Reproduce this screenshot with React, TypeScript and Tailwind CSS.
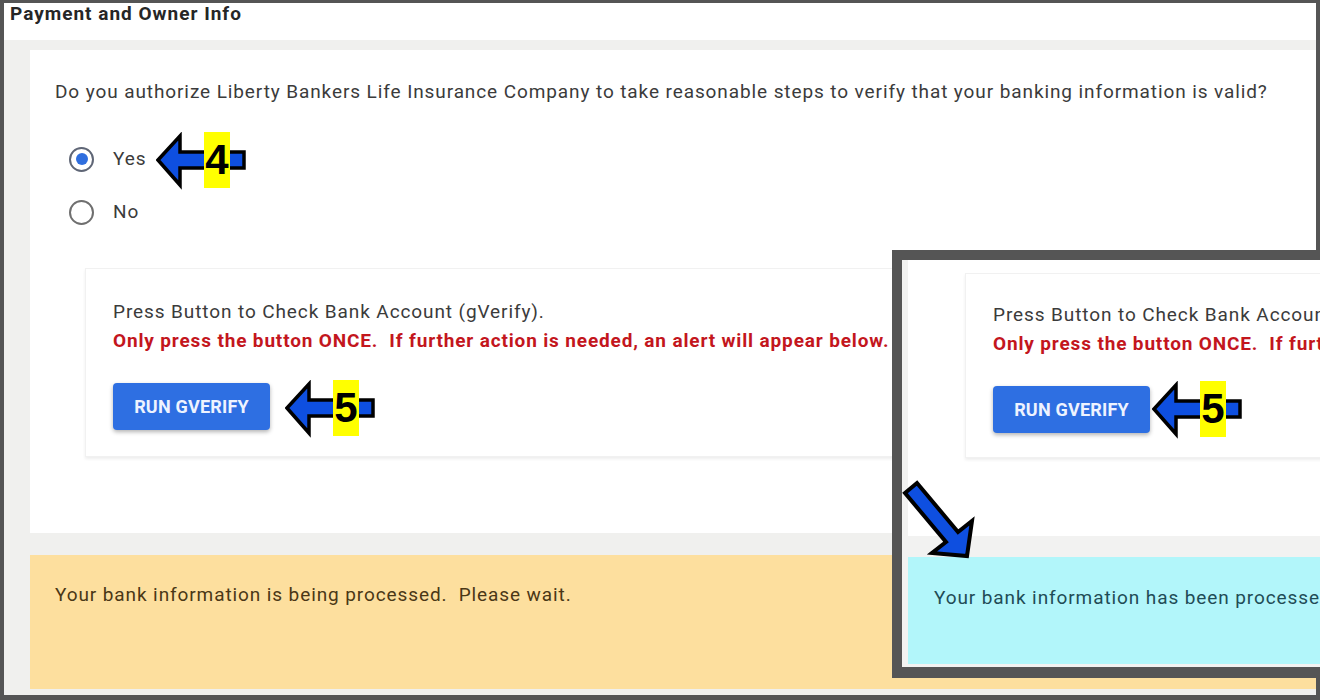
import React from "react";

const font = { fontFamily: "Roboto, 'Liberation Sans', Arial, sans-serif" };

function LeftArrow({ left, top, num }: { left: number; top: number; num: string }) {
  return (
    <div className="absolute w-[92px] h-[58px]" style={{ left, top }}>
      <svg width="92" height="58" viewBox="0 0 92 58" className="absolute left-0 top-0">
        <polygon
          points="2,28 24,4 24,20 88,20 88,36 24,36 24,53"
          fill="#0e4fe0"
          stroke="#000"
          strokeWidth="3.5"
          strokeLinejoin="miter"
        />
      </svg>
      <div className="absolute left-[48px] top-0 w-[26px] h-[56px] bg-[#ffff00] flex items-center justify-center text-black font-bold text-[42px] leading-none font-['Liberation_Sans',Arial,sans-serif]">
        {num}
      </div>
    </div>
  );
}

function Radio({ checked, label }: { checked?: boolean; label: string }) {
  return (
    <div className="flex items-center h-[40px]">
      <div
        className={
          "w-[25px] h-[25px] rounded-full border-2 flex items-center justify-center " +
          (checked ? "border-[#5f6676]" : "border-[#6f6f6f]")
        }
      >
        {checked && <div className="w-[12px] h-[12px] rounded-full bg-[#2f6ede]" />}
      </div>
      <span className="ml-[19px] text-[19px] tracking-[0.9px] text-[#3b3b3b]">{label}</span>
    </div>
  );
}

function GverifyCard({ widthClass, mlClass, ptClass, pbClass }: { widthClass: string; mlClass: string; ptClass: string; pbClass: string }) {
  return (
    <div
      className={
        "bg-white border border-[#f1f1f1] shadow-[0_2px_3px_rgba(0,0,0,0.07)] pl-[27px] shrink-0 " +
        widthClass + " " + mlClass + " " + ptClass + " " + pbClass
      }
    >
      <div className="text-[19px] tracking-[0.9px] leading-[24px] text-[#3b3b3b] whitespace-nowrap">
        Press Button to Check Bank Account (gVerify).
      </div>
      <div className="mt-[5px] text-[19px] tracking-[0.85px] leading-[24px] font-bold text-[#c3161d] whitespace-pre">
        {"Only press the button ONCE.  If further action is needed, an alert will appear below."}
      </div>
      <button className="mt-[30px] w-[157px] h-[47px] rounded-[4px] bg-[#2e6fe2] text-[#eef3ff] font-bold text-[18px] tracking-[0.2px] shadow-[0_2px_4px_rgba(0,0,0,0.3)]">
        RUN GVERIFY
      </button>
    </div>
  );
}

export default function App() {
  return (
    <div className="relative w-[1320px] h-[700px] overflow-hidden bg-[#555555] pt-[3px] pl-[4px] pr-[4px] pb-[5px]" style={font}>
      <div className="flex flex-col h-full bg-[#f0f0ee]">
        {/* header */}
        <div className="h-[37px] bg-white pl-[6px] shrink-0">
          <div className="text-[19px] tracking-[1px] leading-[22px] font-bold text-[#262626]">Payment and Owner Info</div>
        </div>
        <div className="flex-1 pl-[26px] pt-[10px] flex flex-col">
          {/* main card */}
          <div className="bg-white h-[483px] shrink-0 pl-[25px] pt-[30px] overflow-hidden">
            <div className="text-[19px] tracking-[0.9px] leading-[24px] text-[#3b3b3b] whitespace-nowrap">
              Do you authorize Liberty Bankers Life Insurance Company to take reasonable steps to verify that your banking information is valid?
            </div>
            <div className="mt-[35px] ml-[14px] flex flex-col gap-[13px]">
              <Radio checked label="Yes" />
              <Radio label="No" />
            </div>
            <div className="mt-[36px] flex items-start">
              <GverifyCard widthClass="w-[1200px]" mlClass="ml-[30px]" ptClass="pt-[31px]" pbClass="pb-[26px]" />
            </div>
          </div>
          {/* yellow alert */}
          <div className="mt-[22px] h-[134px] bg-[#fddf9e] pl-[25px] pt-[28px] shrink-0">
            <div className="text-[19px] tracking-[0.9px] leading-[24px] text-[#4a3716] whitespace-pre">
              {"Your bank information is being processed.  Please wait."}
            </div>
          </div>
        </div>
      </div>

      {/* annotation arrows */}
      <LeftArrow left={156} top={132} num="4" />
      <LeftArrow left={285} top={380} num="5" />

      {/* inset zoom window */}
      <div className="absolute left-[892px] top-[250px] w-[428px] h-[428px] bg-[#555555] pl-[10px] pt-[10px] pb-[11px]">
        <div className="h-full bg-[#f2f2f1] pl-[6px] flex flex-col overflow-hidden">
          <div className="h-[276px] bg-white shrink-0 pt-[13px] flex items-start overflow-hidden">
            <GverifyCard widthClass="w-[700px]" mlClass="ml-[57px]" ptClass="pt-[29px]" pbClass="pb-[24px]" />
          </div>
          <div className="mt-[21px] h-[107px] bg-[#b2f6fa] pl-[26px] pt-[29px] shrink-0 overflow-hidden">
            <div className="text-[19px] tracking-[0.9px] leading-[24px] text-[#1f4c56] whitespace-nowrap">
              Your bank information has been processed.
            </div>
          </div>
        </div>
      </div>
      <LeftArrow left={1152} top={381} num="5" />

      {/* diagonal arrow */}
      <svg width="85" height="90" viewBox="0 0 85 90" className="absolute left-[895px] top-[475px]">
        <polygon
          points="10,18 22,8 63,57 77,46 72,81 37,78 51,67"
          fill="#0e4fe0"
          stroke="#000"
          strokeWidth="4"
        />
      </svg>
    </div>
  );
}
